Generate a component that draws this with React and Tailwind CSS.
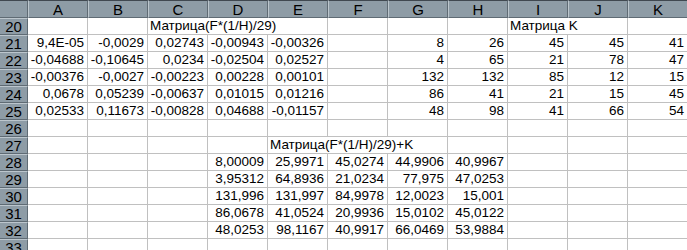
const cols = ["A", "B", "C", "D", "E", "F", "G", "H", "I", "J", "K"];

// sheet contents, row number -> cells by column letter
const data = {
  20: { C: "Матрица(F*(1/H)/29)", I: "Матрица K" },
  21: { A: "9,4E-05", B: "-0,0029", C: "0,02743", D: "-0,00943", E: "-0,00326", G: "8", H: "26", I: "45", J: "45", K: "41" },
  22: { A: "-0,04688", B: "-0,10645", C: "0,0234", D: "-0,02504", E: "0,02527", G: "4", H: "65", I: "21", J: "78", K: "47" },
  23: { A: "-0,00376", B: "-0,0027", C: "-0,00223", D: "0,00228", E: "0,00101", G: "132", H: "132", I: "85", J: "12", K: "15" },
  24: { A: "0,0678", B: "0,05239", C: "-0,00637", D: "0,01015", E: "0,01216", G: "86", H: "41", I: "21", J: "15", K: "45" },
  25: { A: "0,02533", B: "0,11673", C: "-0,00828", D: "0,04688", E: "-0,01157", G: "48", H: "98", I: "41", J: "66", K: "54" },
  26: {},
  27: { E: "Матрица(F*(1/H)/29)+K" },
  28: { D: "8,00009", E: "25,9971", F: "45,0274", G: "44,9906", H: "40,9967" },
  29: { D: "3,95312", E: "64,8936", F: "21,0234", G: "77,975", H: "47,0253" },
  30: { D: "131,996", E: "131,997", F: "84,9978", G: "12,0023", H: "15,001" },
  31: { D: "86,0678", E: "41,0524", F: "20,9936", G: "15,0102", H: "45,0122" },
  32: { D: "48,0253", E: "98,1167", F: "40,9917", G: "66,0469", H: "53,9884" },
  33: {},
};

// text labels run over into the next cells, so those gridlines are hidden
const hideRight = { "20C": true, "20D": true, "20I": true, "27E": true, "27F": true };
const labels = { "20C": true, "20I": true, "27E": true };

const Cell = ({ row, col }) => {
  const key = `${row}${col}`;
  const value = data[row][col];
  const isLabel = labels[key];
  return (
    <div
      className={`relative h-[17px] border-b border-[#c0c0c0] bg-white ${
        hideRight[key] ? "" : "border-r"
      }`}
    >
      {value && (
        <span
          className={`absolute top-0 leading-[16px] whitespace-nowrap ${
            isLabel ? "left-[2px] z-10" : "right-[3px]"
          }`}
        >
          {value}
        </span>
      )}
    </div>
  );
};

const App = () => {
  const rows = Object.keys(data).map(Number);
  return (
    <div
      className="w-[687px] h-[250px] overflow-hidden bg-white text-[13.5px] text-black"
      style={{ fontFamily: '"Liberation Sans", Arial, sans-serif' }}
    >
      <div className="grid grid-cols-[28px_repeat(11,60px)] w-max">
        {/* column headers */}
        <div className="h-[18px] bg-[#8e9ca6] border-t border-t-[#404850] border-r border-r-[#5f6b74] border-b border-b-[#5f6b74]" />
        {cols.map((c) => (
          <div
            key={c}
            className="h-[18px] flex items-center justify-center leading-none text-[15px] bg-[#8e9ca6] border-t border-t-[#404850] border-l border-l-[#bcc6cd] border-r border-r-[#5f6b74] border-b border-b-[#5f6b74]"
          >
            {c}
          </div>
        ))}

        {rows.map((r) => (
          <div key={r} className="contents">
            <div className="h-[17px] flex items-center justify-center leading-none text-[15px] bg-[#8e9ca6] border-t border-t-[#bcc6cd] border-r border-r-[#5f6b74] border-b border-b-[#5f6b74]">
              {r}
            </div>
            {cols.map((c) => (
              <Cell key={c} row={r} col={c} />
            ))}
          </div>
        ))}
      </div>
    </div>
  );
};

export default App;
